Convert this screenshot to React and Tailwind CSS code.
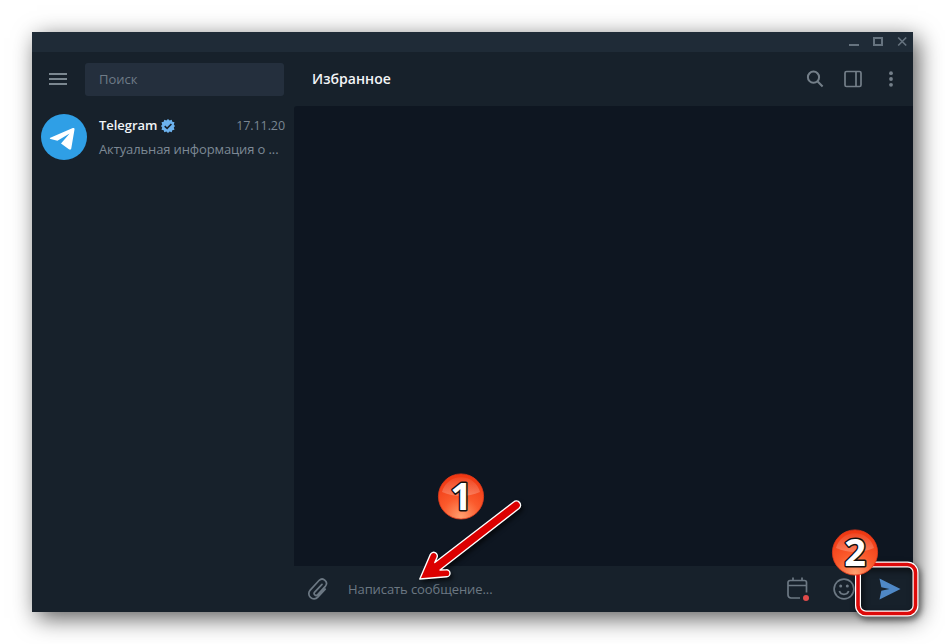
function TitleBar() {
  return (
    <div className="h-5 shrink-0 bg-[#1f2b37] text-[#66737f]">
      <div className="flex h-full items-center justify-end gap-[13px] pr-[6px] pb-px">
        <svg width="11" height="11" viewBox="0 0 11 11" stroke="currentColor" strokeWidth="2">
          <path d="M0 9h10" />
        </svg>
        <svg width="11" height="11" viewBox="0 0 11 11" fill="none" stroke="currentColor" strokeWidth="2">
          <rect x="1" y="2" width="8" height="7" />
        </svg>
        <svg width="10" height="11" viewBox="0 0 10 11" stroke="currentColor" strokeWidth="1.6">
          <path d="M1.200 1.500l8 8M9.200 1.500l-8 8" />
        </svg>
      </div>
    </div>
  );
}

function Avatar() {
  return (
    <svg className="shrink-0" width="46" height="46" viewBox="0 0 46 46">
      <circle cx="23" cy="23" r="23" fill="#2f9fe6" />
      <path
        d="M9.300 23.800 31.800 14.100c1.200-.5 1.900.1 1.700 1.400L30.300 34.200c-.3 1.500-1.200 1.800-2.400 1L20 29.400l8.600-9.800-12.200 7.200-6.800-1.800c-.9-.3-1-.8-.3-1.200z"
        fill="#fff"
      />
    </svg>
  );
}

function Verified() {
  return (
    <svg width="14" height="14" viewBox="0 0 14 14">
      <path
        d="M7 0l1.600 1.500 2.100-.8.600 2.100 2.200.5-.7 2.100L14 7l-1.200 1.600.7 2.100-2.200.5-.6 2.100-2.100-.8L7 14l-1.600-1.500-2.100.8-.6-2.100-2.200-.5.700-2.100L0 7l1.200-1.600-.7-2.100 2.200-.5.600-2.100 2.100.8z"
        fill="#6cb2ee"
      />
      <path d="M3.700 7.200l2.400 2.200L10.400 5" fill="none" stroke="#17212b" strokeWidth="1.600" />
    </svg>
  );
}

function Sidebar() {
  return (
    <aside className="flex w-[262px] shrink-0 flex-col">
      <div className="flex h-[54px] items-center pl-[17px]">
        <svg width="18" height="14" viewBox="0 0 18 14" stroke="#7b8790" strokeWidth="1.800">
          <path d="M0 2h18M0 7h18M0 12h18" />
        </svg>
        <div className="ml-[18px] flex h-[33px] w-[199px] items-center rounded-[3px] bg-[#242f3d] pt-px pl-[14px] text-[13px] text-[#6f7b87]">
          Поиск
        </div>
      </div>
      <div className="flex h-[62px] items-center pl-[9px]">
        <Avatar />
        <div className="ml-3 w-[186px]">
          <div className="flex h-6 items-center pt-px">
            <span className="text-[13px] font-semibold tracking-[-0.050px] text-[#f0f4f7]">Telegram</span>
            <span className="ml-1">
              <Verified />
            </span>
            <span className="ml-auto pt-px text-[12.500px] tracking-[-0.080px] text-[#7a8692]">17.11.20</span>
          </div>
          <div className="h-6 text-[13px] leading-6 tracking-[-0.120px] whitespace-nowrap text-[#7d8995]">
            Актуальная информация о ...
          </div>
        </div>
      </div>
    </aside>
  );
}

function ChatHeader() {
  return (
    <header className="flex h-[54px] shrink-0 items-center pl-[18px] text-[#747f89]">
      <h1 className="pb-[2px] text-[14px] font-semibold tracking-[0.050px] text-[#f3f5f7]">Избранное</h1>
      <svg className="ml-auto" width="18" height="18" viewBox="0 0 18 18" fill="none" stroke="currentColor" strokeWidth="2">
        <circle cx="7.500" cy="7.200" r="5.600" />
        <path d="M11.400 11.200l5.200 5.300" />
      </svg>
      <svg className="ml-5" width="18" height="18" viewBox="0 0 18 18" fill="none" stroke="currentColor" strokeWidth="1.700">
        <rect x="1" y="1.500" width="16" height="15" rx="1.500" />
        <path d="M12 1.500v15" />
      </svg>
      <svg className="mr-5 ml-[27px]" width="4" height="18" viewBox="0 0 4 18" fill="currentColor">
        <circle cx="2" cy="3.200" r="1.900" />
        <circle cx="2" cy="9" r="1.900" />
        <circle cx="2" cy="14.800" r="1.900" />
      </svg>
    </header>
  );
}

function Composer() {
  return (
    <footer className="flex h-[46px] shrink-0 items-center pl-[13px] text-[#6c7883]">
      <svg width="22" height="24" viewBox="0 0 22 24" fill="none" stroke="currentColor" strokeWidth="1.700" strokeLinecap="round">
        <path d="M15 7.300 7.700 15.200a1.900 1.900 0 0 0 2.800 2.600l8-8.700a4.300 4.300 0 0 0-6.300-5.800L3.200 13.100a5.200 5.200 0 0 0 7.600 7.100l7.400-8" />
      </svg>
      <span className="ml-[19px] pt-px text-[13px] tracking-[-0.090px]">Написать сообщение...</span>
      <svg className="ml-auto" width="24" height="24" viewBox="0 0 24 24" fill="none" stroke="currentColor" strokeWidth="1.700">
        <path d="M14 21H5a3 3 0 0 1-3-3V5.500a2 2 0 0 1 2-2h14.500a2 2 0 0 1 2 2V15.500M2 8.500h18.500M7 .5v3M16 .5v3" />
        <circle cx="20" cy="21" r="3" fill="#e04a4a" stroke="none" />
      </svg>
      <svg className="ml-[23px]" width="22" height="22" viewBox="0 0 22 22" fill="none" stroke="currentColor" strokeWidth="1.700">
        <circle cx="11" cy="11" r="9.900" />
        <path d="M6.300 13a5 5 0 0 0 9.400 0" />
        <circle cx="7.700" cy="8" r="1.500" fill="currentColor" stroke="none" />
        <circle cx="14.300" cy="8" r="1.500" fill="currentColor" stroke="none" />
      </svg>
      <svg className="mr-[12px] ml-[24px]" width="22" height="22" viewBox="0 0 22 22" fill="#4f88c6">
        <path d="M.5.500 21.500 11 .5 21.500 2.300 12.700l8.200-1.700-8.200-1.700z" />
      </svg>
    </footer>
  );
}

function Step({ n, className }) {
  return (
    <svg className={className} width="54" height="54" viewBox="0 0 54 54">
      <defs>
        <radialGradient id={`ball${n}`} cx="0.500" cy="0.950" r="0.950">
          <stop offset="0" stopColor="#ffa070" />
          <stop offset="0.450" stopColor="#fb5a2c" />
          <stop offset="1" stopColor="#ee3510" />
        </radialGradient>
        <linearGradient id={`gloss${n}`} x1="0" y1="0" x2="0" y2="1">
          <stop offset="0" stopColor="#fff" stopOpacity="0.060" />
          <stop offset="1" stopColor="#fff" stopOpacity="0.240" />
        </linearGradient>
      </defs>
      <circle cx="27" cy="26.500" r="22.600" fill={`url(#ball${n})`} stroke="#e2381a" strokeWidth="0.800" />
      <path d="M8 22a19.500 19 0 0 1 38 0q-19 8-38 0z" fill={`url(#gloss${n})`} />
      <text
        x="27"
        y="40"
        textAnchor="middle"
        className="font-['Noto_Sans'] text-[38px] font-bold"
        fill="#fff"
        stroke="#111"
        strokeWidth="3"
        strokeLinejoin="round"
        paintOrder="stroke"
      >
        {n}
      </text>
    </svg>
  );
}

function Arrow() {
  return (
    <svg className="absolute top-[490px] left-[410px] drop-shadow-[2px_3px_2px_rgba(0,0,0,0.600)]" width="120" height="100" viewBox="410 490 120 100">
      <path
        d="M513.600 502 434.800 562.500 437 557.500A3.600 3.600 0 0 0 430.300 554.500L419.800 579 446.700 576.800A3.500 3.500 0 0 0 446.300 569.800L440 570 519 508.500A4.100 4.100 0 0 0 513.600 502Z"
        fill="#dc0000"
        stroke="#fff"
        strokeWidth="1.400"
        strokeLinejoin="round"
      />
    </svg>
  );
}

export default function App() {
  return (
    <div className="relative h-[644px] w-[945px] overflow-hidden bg-white p-8 font-['Open_Sans','Noto_Sans',sans-serif]">
      <div className="flex h-[580px] w-[881px] flex-col bg-[#17212b] shadow-[5px_6px_22px_rgba(0,0,0,0.650)]">
        <TitleBar />
        <div className="flex min-h-0 flex-1">
          <Sidebar />
          <main className="flex min-w-0 flex-1 flex-col">
            <ChatHeader />
            <div className="flex-1 rounded-tl-[3px] bg-[#0e1621]" />
            <Composer />
          </main>
        </div>
      </div>

      {/* step callouts */}
      <Arrow />
      <svg className="absolute top-[556px] left-[850px] drop-shadow-[2px_3px_3px_rgba(0,0,0,0.600)]" width="75" height="68" viewBox="850 556 75 68" fill="none">
        <rect x="858" y="564.500" width="57.500" height="49" rx="8" stroke="#fff" strokeWidth="6" />
        <rect x="858" y="564.500" width="57.500" height="49" rx="8" stroke="#dd0a0a" strokeWidth="3.600" />
      </svg>
      <Step n={1} className="absolute top-[470px] left-[434px]" />
      <Step n={2} className="absolute top-[526px] left-[828px]" />
    </div>
  );
}
